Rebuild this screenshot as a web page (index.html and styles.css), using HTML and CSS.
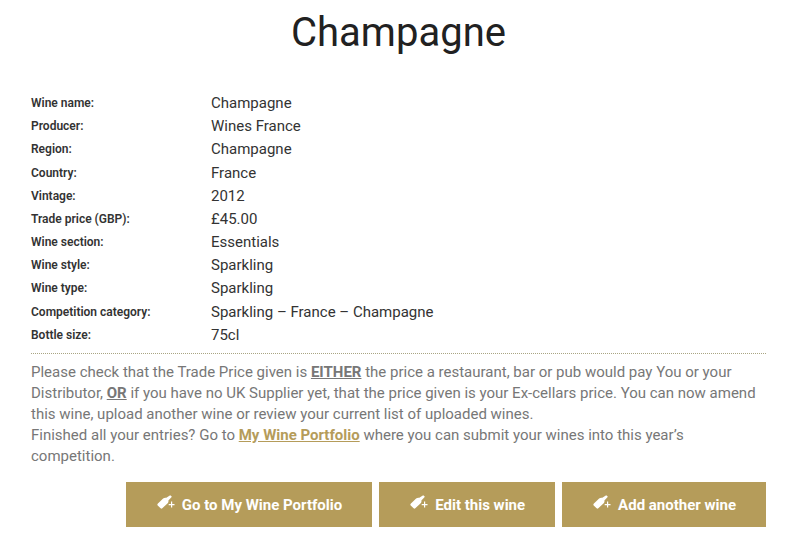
FILE: index.html
```html
<!DOCTYPE html>
<html lang="en">
<head>
  <meta charset="utf-8">
  <title>Champagne</title>
  <link rel="stylesheet" href="styles.css">
</head>
<body>
  <svg class="sprite" aria-hidden="true">
    <symbol id="bottle" viewBox="0 0 18 14">
      <path d="M13.200.2l1.700 1.600-3.500 3.700c.2 1.300-.1 2.200-1 3L5.300 13.300c-.5.5-1.200.5-1.700 0L.7 10.400c-.5-.5-.5-1.200 0-1.700L6.100 3.500c.9-.8 2-1 3.200-.8z"/>
      <path d="M14 6.500h1.200V9h2.300v1.200h-2.300v2.300H14v-2.300h-2.300V9H14z"/>
    </symbol>
  </svg>
  <main class="container">
    <h1>Champagne</h1>
    <dl class="details">
      <dt>Wine name:</dt><dd>Champagne</dd>
      <dt>Producer:</dt><dd>Wines France</dd>
      <dt>Region:</dt><dd>Champagne</dd>
      <dt>Country:</dt><dd>France</dd>
      <dt>Vintage:</dt><dd>2012</dd>
      <dt>Trade price (GBP):</dt><dd>£45.00</dd>
      <dt>Wine section:</dt><dd>Essentials</dd>
      <dt>Wine style:</dt><dd>Sparkling</dd>
      <dt>Wine type:</dt><dd>Sparkling</dd>
      <dt>Competition category:</dt><dd>Sparkling – France – Champagne</dd>
      <dt>Bottle size:</dt><dd>75cl</dd>
    </dl>
    <div class="notes">
      <p>Please check that the Trade Price given is <strong class="underline">EITHER</strong> the price a restaurant, bar or pub would pay You or your Distributor, <strong class="underline">OR</strong> if you have no UK Supplier yet, that the price given is your Ex-cellars price. You can now amend this wine, upload another wine or review your current list of uploaded wines.</p>
      <p>Finished all your entries? Go to <a href="#">My Wine Portfolio</a> where you can submit your wines into this year’s competition.</p>
    </div>
    <div class="actions">
      <a class="button" href="#"><svg class="icon" aria-hidden="true"><use href="#bottle"/></svg>Go to My Wine Portfolio</a>
      <a class="button" href="#"><svg class="icon" aria-hidden="true"><use href="#bottle"/></svg>Edit this wine</a>
      <a class="button" href="#"><svg class="icon" aria-hidden="true"><use href="#bottle"/></svg>Add another wine</a>
    </div>
  </main>
</body>
</html>
```

FILE: styles.css
```css
body {
  margin: 0;
  background: #fff;
  color: #333;
  font-family: Roboto, sans-serif;
  font-size: 15px;
  line-height: 21px;
}
.sprite {
  display: none;
}
.container {
  padding: 8px 35px 24px 31px;
}
h1 {
  margin: 0 0 35px;
  color: #212121;
  font-size: 40px;
  font-weight: 400;
  line-height: 50px;
  text-align: center;
}
.details {
  display: grid;
  grid-template-columns: 180px 1fr;
  grid-auto-rows: 1fr;
  min-height: 255px;
  margin: 0;
  padding-bottom: 5px;
  border-bottom: 1px dotted #a9a583;
}
.details dt {
  font-size: 12px;
  font-weight: 600;
}
.details dd {
  margin: 0;
}
.notes {
  padding: 8px 0 15px;
  color: #777;
}
.notes p {
  margin: 0;
}
.notes a {
  color: #b59c5a;
  font-weight: 700;
}
.underline {
  text-decoration: underline;
}
.actions {
  display: flex;
  justify-content: flex-end;
  gap: 7px;
}
.button {
  display: flex;
  align-items: flex-start;
  gap: 7px;
  padding: 13px 30px 11px 31px;
  background: #b59c5a;
  color: #fff;
  font-weight: 700;
  text-decoration: none;
}
.icon {
  width: 18px;
  height: 14px;
  fill: #fff;
}
```
